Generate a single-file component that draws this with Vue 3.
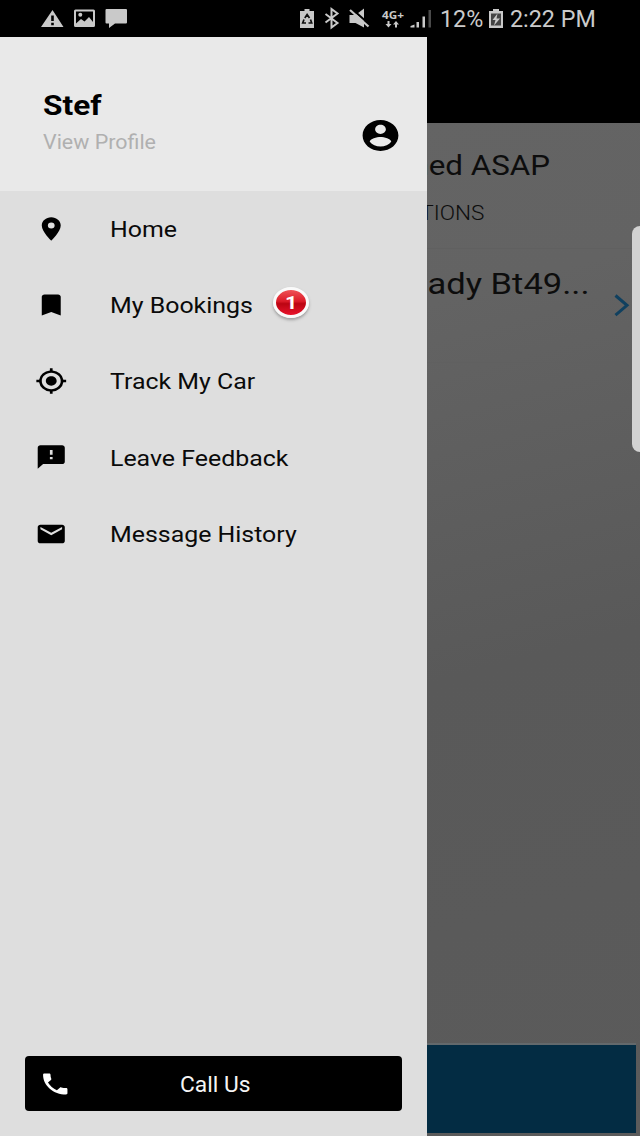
<script setup>
const menu = [
  { label: 'Home', path: 'M12 2C8.13 2 5 5.13 5 9c0 5.25 7 13 7 13s7-7.75 7-13c0-3.87-3.13-7-7-7zm0 9.5a2.5 2.5 0 0 1 0-5 2.5 2.5 0 0 1 0 5z' },
  { label: 'My Bookings', badge: 1, path: 'M17 3H7c-1.1 0-2 .9-2 2v16l7-3 7 3V5c0-1.1-.9-2-2-2z' },
  { label: 'Track My Car', path: 'M12 8c-2.21 0-4 1.79-4 4s1.79 4 4 4 4-1.79 4-4-1.79-4-4-4zm8.94 3A8.994 8.994 0 0 0 13 3.06V1h-2v2.06A8.994 8.994 0 0 0 3.06 11H1v2h2.06A8.994 8.994 0 0 0 11 20.94V23h2v-2.06A8.994 8.994 0 0 0 20.94 13H23v-2h-2.06zM12 19c-3.87 0-7-3.13-7-7s3.13-7 7-7 7 3.13 7 7-3.13 7-7 7z' },
  { label: 'Leave Feedback', path: 'M20 2H4c-1.1 0-1.99.9-1.99 2L2 22l4-4h14c1.1 0 2-.9 2-2V4c0-1.1-.9-2-2-2zm-7 12h-2v-2h2v2zm0-4h-2V6h2v4z' },
  { label: 'Message History', path: 'M20 4H4c-1.1 0-1.99.9-1.99 2L2 18c0 1.1.9 2 2 2h16c1.1 0 2-.9 2-2V6c0-1.1-.9-2-2-2zm0 4l-8 5-8-5V6l8 5 8-5v2z' },
]
</script>

<template>
  <div class="screen">
    <header class="status">
      <svg class="notices" width="88" height="20" viewBox="0 0 88 20">
        <path fill-rule="evenodd" d="M11.5 1 22.500 18H0ZM10.200 6.500v5.500h2.600V6.500Zm0 7.200v2.600h2.600v-2.600Z" />
        <path fill-rule="evenodd" d="M34.5 0.5h18q1.5 0 1.5 1.5v14.500q0 1.500-1.500 1.500h-18q-1.500 0-1.500-1.500V2q0-1.500 1.500-1.500ZM35 2.500v12l5-4.500 3.500 2.500 4.500-4.500 4 5V2.500Z" />
        <circle cx="39.3" cy="5.800" r="2" />
        <path d="M65.500 0h19.500q1 0 1 1v12.500q0 1-1 1H74l-6 4.500v-4.500h-2.500q-1 0-1-1V1q0-1 1-1Z" />
      </svg>
      <svg class="system" width="132" height="22" viewBox="0 0 132 22">
        <path d="M4.500 1h5v2H14v17H0V3h4.500Z" />
        <g fill="none" stroke="#111" stroke-width="1.700">
          <path d="m4.800 10 2.300-3.500 2.400 3.500M10.500 11.500l1.200 3.500H8.500M6 15H2.700l1.300-3.500" />
        </g>
        <path d="m25.500 6 12 9-6 4.500V1l6 4.500-12 9" fill="none" stroke="#c9c9c9" stroke-width="2" />
        <path d="M49.500 7h6l8.500-6.500v19L55.500 15h-6Z" />
        <path d="m51.500 0.500 18.500 16.500" stroke="#000" stroke-width="2.200" />
        <path d="m50 2 18.500 16.500" stroke="#c9c9c9" stroke-width="2.200" />
        <text x="82" y="11" textLength="22" lengthAdjust="spacingAndGlyphs">4G+</text>
        <path d="M88.500 19.500 85.500 16h2V13h2v3h2ZM96 13l3 3.500h-2V19.500h-2v-3h-2Z" />
        <path d="M110.500 19.500V18l4-1.500v3ZM116.500 14h2.500v5.500h-2.500ZM122.500 8.500h2.500v11h-2.500Z" />
        <path d="M128.500 2h2.500v17.500h-2.500Z" fill="#4a4a4a" />
      </svg>
      <span class="percent">12%</span>
      <svg class="battery" width="14" height="20" viewBox="0 0 14 20">
        <path d="M4 0h6v2h4v17H0V2h4Z" />
        <path d="M2 4.500h10v12H2Z" fill="#444" />
        <path d="M8.500 4.500 3.500 11H6.500L5 16.500l6-7H7.500Z" />
      </svg>
      <span class="clock">2:22 PM</span>
    </header>

    <main class="body">
      <section class="page">
        <div class="appbar"></div>
        <div class="content">
          <p class="asap"><span>ned ASAP</span></p>
          <p class="options"><span>TIONS</span></p>
          <div class="booking">
            <p class="title"><span>ady Bt49...</span></p>
            <svg class="chevron" width="16" height="23" viewBox="0 0 16 23"><path d="m1.500 1.500 11.500 9.800-11.500 9.800" /></svg>
          </div>
        </div>
        <div class="action"></div>
      </section>

      <aside class="drawer">
        <div class="profile">
          <div class="who">
            <h1><span>Stef</span></h1>
            <p><span>View Profile</span></p>
          </div>
          <svg class="avatar" viewBox="0 0 24 24" preserveAspectRatio="none"><path d="M12 2C6.480 2 2 6.480 2 12s4.480 10 10 10 10-4.480 10-10S17.520 2 12 2zm0 3c1.660 0 3 1.340 3 3s-1.340 3-3 3-3-1.340-3-3 1.340-3 3-3zm0 14.200c-2.500 0-4.710-1.280-6-3.220.03-1.990 4-3.080 6-3.080 1.990 0 5.970 1.090 6 3.080-1.290 1.940-3.500 3.220-6 3.220z" /></svg>
        </div>
        <nav>
          <a v-for="item in menu" :key="item.label" class="item">
            <svg class="icon" viewBox="0 0 24 24" preserveAspectRatio="none"><path :d="item.path" /></svg>
            <span class="label">{{ item.label }}</span>
            <span v-if="item.badge" class="badge"><b>{{ item.badge }}</b></span>
          </a>
        </nav>
        <button class="call">
          <svg class="icon" viewBox="0 0 24 24" preserveAspectRatio="none"><path d="M6.620 10.790c1.440 2.830 3.760 5.140 6.590 6.590l2.200-2.200c.27-.27.67-.36 1.020-.24 1.120.37 2.330.57 3.570.57.55 0 1 .45 1 1V20c0 .55-.45 1-1 1-9.390 0-17-7.610-17-17 0-.55.45-1 1-1h3.500c.55 0 1 .45 1 1 0 1.250.2 2.450.57 3.570.11.35.03.74-.25 1.020l-2.200 2.200z" /></svg>
          <span class="call-label"><span>Call Us</span></span>
        </button>
      </aside>
      <div class="edge"></div>
    </main>
  </div>
</template>

<style>
html, body { margin: 0; background: #000; }
</style>

<style scoped>
.screen {
  width: 640px;
  height: 1136px;
  display: flex;
  flex-direction: column;
  overflow: hidden;
  background: #000;
  font-family: Roboto, "Liberation Sans", sans-serif;
}
p, h1 { margin: 0; }
p span, h1 span, .label, .call-label span {
  display: inline-block;
  white-space: nowrap;
  transform: scaleX(1.158);
  transform-origin: left;
}
svg { display: block; flex: none; overflow: visible; }

.status {
  height: 37px;
  display: flex;
  align-items: center;
  color: #cbcbcb;
  fill: #c9c9c9;
  font-size: 23.300px;
  white-space: nowrap;
}
.notices { margin-left: 41px; }
.system { margin-left: 171px; }
.system text { font: 700 11px "Open Sans", sans-serif; }
.percent { width: 48px; margin-left: 8px; padding-top: 1px; }
.battery { margin-left: 1px; }
.clock { margin-left: 7px; padding-top: 1px; }

.body { position: relative; flex: 1; }
.page { height: 100%; display: flex; flex-direction: column; padding-left: 427px; background: linear-gradient(165deg, #656565 0, #636363 30%, #595959 60%, #5b5b5b 100%); }
.appbar { height: 86px; margin-left: -427px; background: #000; }
.content { flex: 1; color: #0d0d0d; }
.content p { display: flex; justify-content: flex-end; }
.content p span { transform-origin: right; }
.asap { height: 65px; padding-right: 90px; font-size: 28.5px; line-height: 86px; }
.content .asap span { transform: scaleX(1.1); }
.options { height: 60px; padding-right: 156px; font-size: 19.5px; line-height: 52px; font-weight: 300; border-bottom: 1px solid #606060; }
.booking { height: 113px; display: flex; justify-content: flex-end; border-bottom: 1px solid #606060; }
.title { padding-right: 25px; font-size: 29.5px; line-height: 71px; }
.content .title span { transform: scaleX(1.17); }
.chevron { margin: 45px 10px 0 0; fill: none; stroke: #10405f; stroke-width: 3; }
.action { height: 88px; margin: 0 4px 3px 0; background: #032c43; border-top: 2px solid #63696c; }

.drawer {
  position: absolute;
  inset: 0 auto 0 0;
  width: 427px;
  display: flex;
  flex-direction: column;
  background: #dedede;
}
.profile { height: 153.500px; flex: none; display: flex; align-items: flex-start; background: #e9e9e9; }
.who { flex: 1; padding: 51px 0 0 43px; }
h1 { font-size: 27px; line-height: 36px; font-weight: 700; }
.who h1 span { transform: scaleX(1.17); }
.who p { font-size: 19.500px; line-height: 37px; color: #b0b0b0; }
.who p span { transform: scaleX(1.1); }
.avatar { width: 43px; height: 37px; margin: 79.500px 25px 0 0; }

.item { height: 76.200px; display: flex; align-items: center; }
.icon { width: 32.500px; height: 28px; }
.item .icon { margin: 0.500px 0 0 35.300px; }
.label { width: 128px; margin-left: 42.500px; padding-top: 2px; font-size: 21.500px; color: #0a0a0a; }
.badge {
  width: 30px;
  height: 25px;
  margin: -4px 0 0 35.200px;
  display: grid;
  place-items: center;
  border: 3px solid #fafafa;
  border-radius: 50%;
  background: linear-gradient(#ef5357 0, #dc1b28 45%, #bb0512 55%, #e8132b 100%);
  box-shadow: 0 2px 3px #6668;
  color: #fff;
  font-size: 18px;
}
.badge b { transform: scaleX(1.2); }
.call {
  width: 377px;
  height: 55px;
  margin: auto 0 25px 25px;
  padding: 0 0 0 14px;
  display: flex;
  align-items: center;
  border: 0;
  border-radius: 4px;
  background: #000;
  color: #f5f5f5;
  fill: #fff;
  font: 21.500px Roboto, sans-serif;
}
.call-label { margin-left: 108.500px; padding-top: 1px; }
.call .call-label span { transform: scaleX(1.06); }

.edge {
  position: absolute;
  top: 189px;
  right: 0;
  width: 8px;
  height: 226px;
  border-radius: 9px 0 0 9px;
  background: #d2d2d2;
}
</style>
